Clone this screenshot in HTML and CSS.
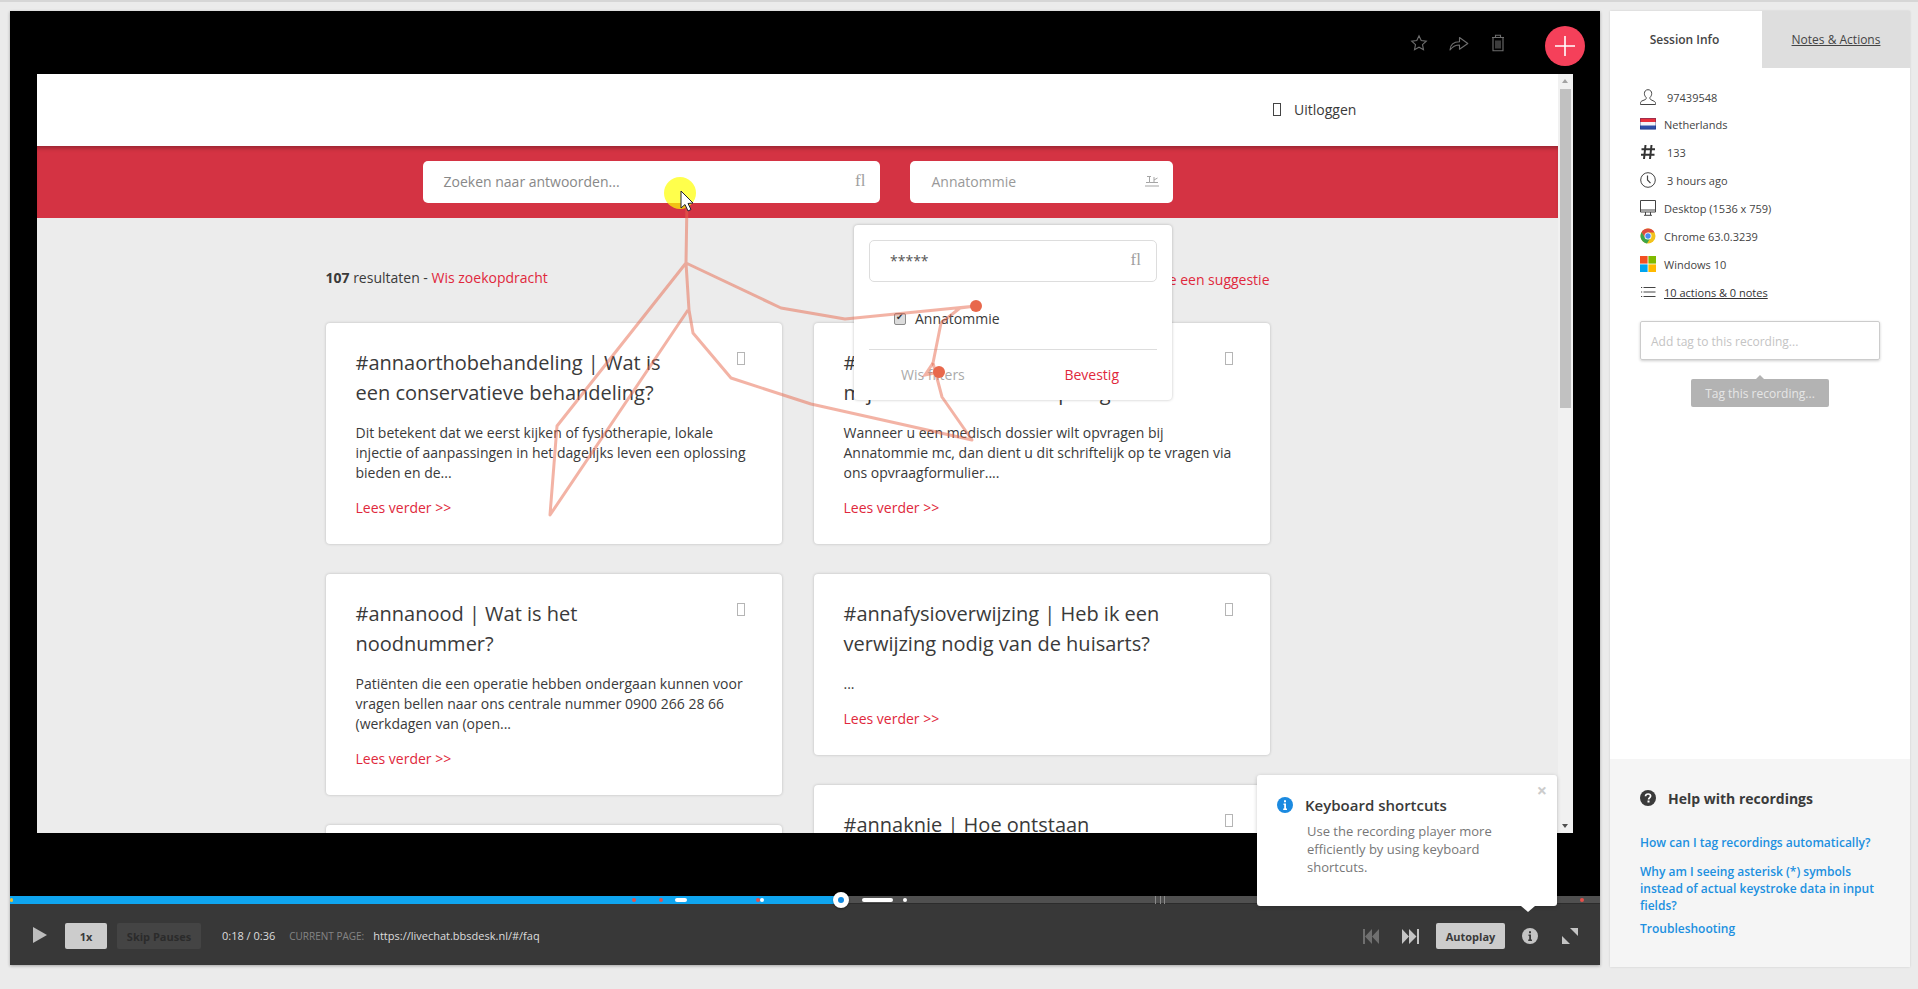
FILE: index.html
```html
<!DOCTYPE html>
<html lang="en">
<head>
  <meta charset="UTF-8">
  <title>Recording player</title>
  <link rel="stylesheet" href="styles.css">
</head>
<body>
  <div class="page">
    <div class="player">
      <div class="stage">
        <div class="stage-tools">
          <svg class="tool" width="18" height="18" viewBox="0 0 18 18"><path d="M9 1.800l2.200 4.700 5.100.6-3.800 3.500 1 5.100L9 13.200l-4.500 2.500 1-5.100-3.800-3.500 5.100-.6z" fill="none" stroke="#6e6e6e" stroke-width="1.100"/></svg>
          <svg class="tool" width="20" height="18" viewBox="0 0 20 18"><path d="M1 16c.3-5.400 3.600-8.300 9.500-8.300V3.500L18.800 9.500l-8.300 5.700v-4.200C6.500 11 3.500 12.500 1 16z" fill="none" stroke="#6e6e6e" stroke-width="1.100" stroke-linejoin="round"/></svg>
          <svg class="tool" width="14" height="18" viewBox="0 0 14 18"><path d="M1 3.500h12M4.500 3.500V1.200h5v2.300M2 3.500v13.300h10V3.500M5 6.500v8M7 6.500v8M9 6.500v8" fill="none" stroke="#6e6e6e" stroke-width="1.100"/></svg>
          <button class="add-btn" type="button" aria-label="Add"><svg width="20" height="20" viewBox="0 0 20 20"><path d="M10 0v20M0 10h20" stroke="#fff" stroke-width="1.600"/></svg></button>
        </div>

        <div class="viewer">
          <div class="site">
            <div class="site-header">
              <span class="tofu tofu-nav"></span>
              <span class="logout">Uitloggen</span>
            </div>
            <div class="site-search">
              <div class="field field-main"><span>Zoeken naar antwoorden...</span><span class="field-icon">fl</span></div>
              <div class="field field-filter"><span>Annatommie</span>
                <svg class="filter-icon" width="14" height="11" viewBox="0 0 14 11"><path d="M0 10h14M2 .5h4M4.500 .5v6H1M4.500 6.500h8.500M9 1v5.500M9 4l3.500-2" fill="none" stroke="#a5a5a5" stroke-width="1"/></svg>
              </div>
            </div>
            <div class="site-body">
              <div class="results-line">
                <div><b>107</b> resultaten - <a class="red" href="#">Wis zoekopdracht</a></div>
                <a class="red suggest" href="#">Doe een suggestie</a>
              </div>
              <div class="columns">
                <div class="col">
                  <div class="card">
                    <div class="card-head"><h3>#annaorthobehandeling | Wat is<br>een conservatieve behandeling?</h3><span class="tofu"></span></div>
                    <p>Dit betekent dat we eerst kijken of fysiotherapie, lokale injectie of aanpassingen in het dagelijks leven een oplossing bieden en de...</p>
                    <a class="red more" href="#">Lees verder &gt;&gt;</a>
                  </div>
                  <div class="card">
                    <div class="card-head"><h3>#annanood | Wat is het<br>noodnummer?</h3><span class="tofu"></span></div>
                    <p>Patiënten die een operatie hebben ondergaan kunnen voor vragen bellen naar ons centrale nummer 0900 266 28 66 (werkdagen van (open...</p>
                    <a class="red more" href="#">Lees verder &gt;&gt;</a>
                  </div>
                  <div class="card card-empty"></div>
                </div>
                <div class="col">
                  <div class="card">
                    <div class="card-head"><h3>#annadossier | Hoe kan ik<br>mijn medisch dossier opvragen?</h3><span class="tofu"></span></div>
                    <p>Wanneer u een medisch dossier wilt opvragen bij Annatommie mc, dan dient u dit schriftelijk op te vragen via ons opvraagformulier....</p>
                    <a class="red more" href="#">Lees verder &gt;&gt;</a>
                  </div>
                  <div class="card">
                    <div class="card-head"><h3>#annafysioverwijzing | Heb ik een<br>verwijzing nodig van de huisarts?</h3><span class="tofu"></span></div>
                    <p>...</p>
                    <a class="red more" href="#">Lees verder &gt;&gt;</a>
                  </div>
                  <div class="card">
                    <div class="card-head"><h3>#annaknie | Hoe ontstaan</h3><span class="tofu"></span></div>
                  </div>
                </div>
              </div>
            </div>
          </div>

          <div class="scrollbar">
            <span class="arrow-up"></span>
            <span class="thumb"></span>
            <span class="arrow-down"></span>
          </div>

          <div class="dropdown">
            <div class="dropdown-search"><span>*****</span><span class="field-icon">fl</span></div>
            <label class="dropdown-option"><input type="checkbox" checked> Annatommie</label>
            <div class="dropdown-foot">
              <span class="muted">Wis filters</span>
              <span class="red">Bevestig</span>
            </div>
          </div>

          <svg class="trail" viewBox="37 74 1536 759" width="1536" height="759">
            <circle cx="680" cy="193" r="16" fill="#ffff00" fill-opacity=".7"/>
            <polyline points="687,200 686,263 689,310 693,333 731,378 811,404 972,440 942,397 933,363 941,323 960,308 976,306 845,319 781,308 686,263 557,426 550,515 688,310" fill="none" stroke="#e8684c" stroke-opacity=".5" stroke-width="3" stroke-linejoin="round"/>
            <polyline points="933,363 925,375 939,372" fill="none" stroke="#e8684c" stroke-opacity=".5" stroke-width="3"/>
            <circle cx="976" cy="306" r="6" fill="#e8684c"/>
            <circle cx="939" cy="372" r="6" fill="#e8684c"/>
            <path d="M681 191v17l4-3.500 3 6.500 3-1.500-3-6 5-.5z" fill="#fff" stroke="#223" stroke-width="1"/>
          </svg>
        </div>
      </div>

      <div class="progress">
        <span class="progress-fill"></span>
        <span class="mark mark-yellow" style="left:0px"></span>
        <span class="mark mark-red" style="left:622px"></span>
        <span class="mark mark-red" style="left:649px"></span>
        <span class="mark mark-white" style="left:665px;width:12px"></span>
        <span class="mark mark-red" style="left:746px"></span>
        <span class="mark mark-white" style="left:750px"></span>
        <span class="mark mark-white" style="left:852px;width:31px"></span>
        <span class="mark mark-white" style="left:893px"></span>
        <span class="tick" style="left:1145px"></span>
        <span class="tick" style="left:1150px"></span>
        <span class="tick" style="left:1154px"></span>
        <span class="mark mark-red" style="left:1570px"></span>
        <span class="knob"></span>
      </div>

      <div class="controls">
        <svg class="play" width="14" height="16" viewBox="0 0 14 16"><path d="M0 0l14 8-14 8z" fill="#bdbdbd"/></svg>
        <button class="ctl-btn speed" type="button">1x</button>
        <button class="ctl-btn skip" type="button">Skip Pauses</button>
        <span class="time">0:18 / 0:36</span>
        <span class="page-label">CURRENT PAGE:</span>
        <span class="page-url">https://livechat.bbsdesk.nl/#/faq</span>
        <div class="controls-right">
          <svg width="16" height="15" viewBox="0 0 16 15"><path d="M0 0h2v15H0zM9 0v15L2 7.500zM16 0v15L9 7.500z" fill="#6f6f6f"/></svg>
          <svg width="17" height="15" viewBox="0 0 17 15"><path d="M0 0v15l7-7.500zM7 0v15l7.500-7.500zM15 0h2v15h-2z" fill="#c4c4c4"/></svg>
          <button class="ctl-btn autoplay" type="button">Autoplay</button>
          <svg width="16" height="16" viewBox="0 0 16 16"><circle cx="8" cy="8" r="8" fill="#c4c4c4"/><path d="M7 3.200h2v2H7zM6.500 6.500H9v5h1V13H6.200v-1.500h1v-3.500h-.7z" fill="#383838"/></svg>
          <svg class="fullscreen" width="16" height="16" viewBox="0 0 16 16"><path d="M8 0h8v8zM0 8l8 8H0z" fill="#c4c4c4"/></svg>
        </div>
      </div>

      <div class="shortcut-tip">
        <button class="tip-close" type="button" aria-label="Close">×</button>
        <div class="tip-title">
          <svg width="16" height="16" viewBox="0 0 16 16"><circle cx="8" cy="8" r="8" fill="#1b8ae0"/><path d="M7 3.200h2v2H7zM6.500 6.500H9v5h1V13H6.200v-1.500h1v-3.500h-.7z" fill="#fff"/></svg>
          <span>Keyboard shortcuts</span>
        </div>
        <p>Use the recording player more efficiently by using keyboard shortcuts.</p>
      </div>
    </div>

    <aside class="side">
      <div class="tabs">
        <div class="tab active">Session Info</div>
        <div class="tab">Notes &amp; Actions</div>
      </div>
      <div class="side-main">
        <ul class="info">
          <li class="wide">
            <svg width="16" height="16" viewBox="0 0 16 16"><path d="M8 .7c-2.300 0-3.600 1.700-3.600 3.900 0 1.600.8 3 1.700 3.800.3.900 0 1.700-.6 2.100L1.800 12c-1.100.6-1.300 1.400-1.300 2.500v1h15v-1c0-1-.3-1.700-1.300-2.200l-3.500-1.700c-.7-.5-1-1.300-.7-2.200.9-.8 1.700-2.200 1.700-3.800C11.700 2.400 10.300.7 8 .7z" fill="none" stroke="#444" stroke-width="1"/></svg>
            <span>97439548</span>
          </li>
          <li>
            <svg width="16" height="16" viewBox="0 0 16 16"><rect y="2" width="16" height="4" fill="#e8303c"/><rect y="6" width="16" height="3.500" fill="#f4f4f8"/><rect y="9.500" width="16" height="4" fill="#2f4fa8"/><path d="M.5 2.500h15v10.500H.5z" fill="none" stroke="#1b2a6b" stroke-opacity=".35"/></svg>
            <span>Netherlands</span>
          </li>
          <li class="wide">
            <svg width="16" height="16" viewBox="0 0 16 16"><path d="M5.500 1L4 15M11.500 1L10 15M1.500 5.300h13.500M1 10.700h13.500" stroke="#333" stroke-width="2"/></svg>
            <span>133</span>
          </li>
          <li class="wide">
            <svg width="16" height="16" viewBox="0 0 16 16"><circle cx="8" cy="8" r="7.300" fill="none" stroke="#444" stroke-width="1"/><path d="M7.500 3.500V8l3 3.200" fill="none" stroke="#444" stroke-width="1.200"/></svg>
            <span>3 hours ago</span>
          </li>
          <li>
            <svg width="16" height="16" viewBox="0 0 16 16"><path d="M.5 .5h15v11.500H.5zM.5 10h15M5.500 12v3M10.500 12v3M4 15.300h8" fill="none" stroke="#444" stroke-width="1"/></svg>
            <span>Desktop (1536 x 759)</span>
          </li>
          <li>
            <svg width="16" height="16" viewBox="0 0 16 16"><circle cx="8" cy="8" r="7.500" fill="#f2c31d"/><path d="M8 .5A7.500 7.500 0 0 0 1.500 4.250L4.500 9.500 8 4.500h6.500A7.500 7.500 0 0 0 8 .5z" fill="#dd4b3e"/><path d="M1.500 4.250A7.500 7.500 0 0 0 7 15.430L10 10.500H5.500z" fill="#3ba54a"/><circle cx="8" cy="8" r="3.500" fill="#fff"/><circle cx="8" cy="8" r="2.700" fill="#4a8af0"/></svg>
            <span>Chrome 63.0.3239</span>
          </li>
          <li>
            <svg width="16" height="16" viewBox="0 0 16 16"><rect width="7.600" height="7.600" fill="#f25022"/><rect x="8.400" width="7.600" height="7.600" fill="#7fba00"/><rect y="8.400" width="7.600" height="7.600" fill="#00a4ef"/><rect x="8.400" y="8.400" width="7.600" height="7.600" fill="#ffb900"/></svg>
            <span>Windows 10</span>
          </li>
          <li>
            <svg width="16" height="16" viewBox="0 0 16 16"><path d="M3.500 3.500H15.500M3.500 8H15.500M3.500 12.500H15.500M1 3.500h1.200M1 8h1.200M1 12.500h1.200" stroke="#444" stroke-width="1"/></svg>
            <a class="actions-link" href="#">10 actions &amp; 0 notes</a>
          </li>
        </ul>
        <div class="tag-input">Add tag to this recording...</div>
        <div class="tag-tip">Tag this recording...</div>
      </div>
      <div class="help">
        <div class="help-title">
          <svg width="16" height="16" viewBox="0 0 16 16"><circle cx="8" cy="8" r="8" fill="#3a3a3a"/><path d="M5.500 6.200C5.600 4.700 6.700 4 8.100 4c1.500 0 2.500.9 2.500 2.100 0 1.800-2 1.700-2 3.300" fill="none" stroke="#fff" stroke-width="1.700"/><rect x="7.500" y="10.500" width="2" height="2" fill="#fff"/></svg>
          <span>Help with recordings</span>
        </div>
        <a class="help-link" href="#">How can I tag recordings automatically?</a>
        <a class="help-link help-link-gap" href="#">Why am I seeing asterisk (*) symbols instead of actual keystroke data in input fields?</a>
        <a class="help-link" href="#">Troubleshooting</a>
      </div>
    </aside>
  </div>
</body>
</html>
```

FILE: styles.css
```css
* {
  box-sizing: border-box;
}
html, body {
  height: 100%;
}
body {
  margin: 0;
  background-color: #ebebeb;
  border-top: 2px solid #d6d6d6;
  font-family: "Open Sans", sans-serif;
  color: #333;
  overflow: hidden;
}
a {
  text-decoration: none;
}
button {
  font-family: inherit;
  border: none;
  cursor: pointer;
}
.red {
  color: #e0283c;
}
.muted {
  color: #aaa;
}
.page {
  display: flex;
  align-items: flex-start;
  gap: 10px;
  padding: 9px 8px 0 10px;
}

/* player */
.player {
  position: relative;
  width: 1590px;
  height: 954px;
  display: flex;
  flex-direction: column;
  box-shadow: 0 1px 3px rgba(0,0,0,0.3);
}
.stage {
  flex: 1;
  background-color: #000;
  display: flex;
  flex-direction: column;
}
.stage-tools {
  height: 63px;
  display: flex;
  align-items: flex-start;
  justify-content: flex-end;
  padding-right: 15px;
}
.tool {
  margin-top: 23px;
  margin-right: 21px;
}
.tool:nth-child(2) {
  margin-right: 22px;
}
.tool:nth-child(3) {
  margin-right: 40px;
}
.add-btn {
  width: 40px;
  height: 40px;
  margin-top: 15px;
  border-radius: 50%;
  background-color: #f5405a;
  display: flex;
  align-items: center;
  justify-content: center;
  padding: 0;
}

/* recorded page */
.viewer {
  position: relative;
  width: 1536px;
  height: 759px;
  margin-left: 27px;
  display: flex;
  overflow: hidden;
  background-color: #ececec;
}
.site {
  flex: 1;
  min-width: 0;
}
.site-header {
  height: 72px;
  background-color: #fff;
  display: flex;
  align-items: center;
  padding: 0 0 2px 1236px;
  font-size: 14px;
  gap: 13px;
}
.logout {
  color: #3a3a3a;
}
.tofu {
  flex: none;
  width: 8px;
  height: 13px;
  border: 1px solid #b5b5b5;
  margin: 4px 7px 0 0;
}
.tofu-nav {
  border-color: #444;
  margin: 0;
}
.site-search {
  height: 72px;
  background-color: #d43343;
  box-shadow: inset 0 4px 4px -2px rgba(0,0,0,0.3);
  display: flex;
  justify-content: center;
  padding-top: 15px;
  gap: 30px;
}
.field {
  height: 42px;
  background-color: #fff;
  border-radius: 5px;
  display: flex;
  align-items: center;
  justify-content: space-between;
  padding-bottom: 2px;
  font-size: 14px;
}
.field-main {
  width: 457px;
  padding-left: 21px;
  padding-right: 14px;
  color: #888;
}
.field-filter {
  width: 263px;
  padding-left: 22px;
  padding-right: 14px;
  color: #999;
}
.field-icon {
  font-family: "Liberation Serif", serif;
  font-size: 17px;
  color: #a0a0a0;
}
.site-body {
  width: 944px;
  margin: 0 auto;
}
.results-line {
  height: 105px;
  display: flex;
  justify-content: space-between;
  padding-top: 50px;
  font-size: 14px;
  color: #3a3a3a;
}
.suggest {
  padding-top: 2px;
}
.columns {
  display: flex;
  gap: 32px;
}
.col {
  width: 456px;
}
.card {
  background-color: #fff;
  border-radius: 4px;
  box-shadow: 0 0 3px rgba(0,0,0,0.22);
  padding: 25px 30px 26px;
  margin-bottom: 30px;
}
.card-empty {
  height: 60px;
}
.card-head {
  display: flex;
  justify-content: space-between;
  align-items: flex-start;
}
.card h3 {
  margin: 0;
  font-size: 20px;
  line-height: 30px;
  font-weight: 400;
  color: #3a3a3a;
  white-space: nowrap;
}
.card p {
  margin: 15px 0 15px;
  font-size: 14px;
  line-height: 20px;
  color: #3a3a3a;
}
.more {
  display: block;
  font-size: 14px;
  line-height: 20px;
}
.scrollbar {
  width: 15px;
  background-color: #f1f1f1;
  display: flex;
  flex-direction: column;
  align-items: center;
  position: relative;
}
.thumb {
  width: 11px;
  height: 319px;
  margin-top: 15px;
  background-color: #c1c1c1;
}
.arrow-up, .arrow-down {
  position: absolute;
  left: 4px;
  width: 0;
  height: 0;
  border-left: 3.500px solid transparent;
  border-right: 3.500px solid transparent;
}
.arrow-up {
  top: 5px;
  border-bottom: 4px solid #a3a3a3;
}
.arrow-down {
  bottom: 5px;
  border-top: 4px solid #505050;
}

/* filter menu over the page */
.dropdown {
  position: absolute;
  left: 817px;
  top: 151px;
  width: 318px;
  height: 175px;
  padding: 15px;
  background-color: #fff;
  border-radius: 4px;
  box-shadow: 0 0 3px rgba(0,0,0,0.25);
  font-size: 14px;
}
.dropdown-search {
  height: 42px;
  border: 1px solid #ddd;
  border-radius: 5px;
  display: flex;
  align-items: center;
  justify-content: space-between;
  padding: 0 15px 2px 20px;
  color: #555;
}
.dropdown-option {
  display: flex;
  align-items: center;
  height: 27px;
  margin: 23px 0 0 25px;
  gap: 9px;
  color: #3a3a3a;
}
.dropdown-option input {
  appearance: none;
  position: relative;
  width: 12px;
  height: 12px;
  margin: 0;
  border: 1px solid #8a8a8a;
  border-radius: 2px;
  background-color: #dcdcdc;
}
.dropdown-option input::after {
  content: "✔";
  position: absolute;
  left: 1px;
  top: -2px;
  font-family: "DejaVu Sans", sans-serif;
  font-size: 9px;
  color: #333;
}
.dropdown-foot {
  display: flex;
  justify-content: space-between;
  border-top: 1px solid #ddd;
  margin-top: 17px;
  padding: 15px 38px 0 32px;
}
.trail {
  position: absolute;
  left: 0;
  top: 0;
  pointer-events: none;
}

/* timeline */
.progress {
  position: relative;
  height: 8px;
  background-color: #505050;
  border-bottom: 1px solid #2c2c2c;
}
.progress-fill {
  position: absolute;
  left: 0;
  top: 0;
  height: 8px;
  width: 831px;
  background-color: #0fa5ef;
}
.mark {
  position: absolute;
  top: 2px;
  height: 4px;
  width: 4px;
  border-radius: 2px;
}
.mark-red {
  background-color: #e8504a;
}
.mark-white {
  background-color: #fff;
}
.mark-yellow {
  background-color: #f0c030;
  width: 3px;
}
.tick {
  position: absolute;
  top: 0;
  width: 1px;
  height: 8px;
  background-color: #8a8a8a;
}
.knob {
  position: absolute;
  left: 823px;
  top: -4px;
  width: 16px;
  height: 16px;
  border-radius: 50%;
  background-color: #fff;
  border: 5px solid #fff;
  box-shadow: 0 1px 2px rgba(0,0,0,0.4);
}
.knob::after {
  content: "";
  display: block;
  width: 6px;
  height: 6px;
  border-radius: 50%;
  background-color: #1088e0;
}

/* control bar */
.controls {
  height: 61px;
  flex: none;
  background-color: #383838;
  display: flex;
  align-items: flex-start;
  padding: 19px 22px 0 23px;
  color: #ddd;
  font-size: 11px;
}
.play {
  margin: 4px 18px 0 0;
}
.ctl-btn {
  height: 26px;
  border-radius: 2px;
  font-size: 11px;
  font-weight: 700;
  padding: 0;
}
.speed {
  width: 42px;
  background-color: #ccc;
  color: #3a3a3a;
  margin-right: 10px;
}
.skip {
  width: 84px;
  background-color: #444;
  color: #2b2b2b;
  margin-right: 21px;
}
.time {
  margin-right: 14px;
  line-height: 26px;
}
.page-label {
  font-size: 10px;
  color: #858585;
  margin-right: 9px;
  line-height: 26px;
}
.page-url {
  line-height: 26px;
}
.controls-right {
  margin-left: auto;
  display: flex;
  align-items: center;
  height: 26px;
  gap: 23px;
}
.autoplay {
  width: 69px;
  background-color: #ccc;
  color: #3a3a3a;
  margin: 0 -6px 0 -6px;
}
.fullscreen {
  margin-left: 1px;
}

/* tooltip over the bar */
.shortcut-tip {
  position: absolute;
  right: 43px;
  bottom: 59px;
  width: 300px;
  height: 131px;
  background-color: #fff;
  border-radius: 3px;
  box-shadow: 0 1px 4px rgba(0,0,0,0.2);
  padding: 19px 20px 0;
}
.shortcut-tip::after {
  content: "";
  position: absolute;
  left: 264px;
  top: 131px;
  border-left: 7px solid transparent;
  border-right: 7px solid transparent;
  border-top: 6px solid #fff;
}
.tip-close {
  position: absolute;
  right: 9px;
  top: 5px;
  width: 12px;
  height: 20px;
  padding: 0;
  background: none;
  font-size: 18px;
  font-weight: 700;
  line-height: 20px;
  color: #ccc;
}
.tip-title {
  display: flex;
  align-items: center;
  gap: 12px;
  height: 22px;
  font-size: 15px;
  font-weight: 600;
  color: #3a3a3a;
}
.shortcut-tip p {
  margin: 6px 25px 0 30px;
  font-size: 13px;
  line-height: 18px;
  color: #777;
}

/* side panel */
.side {
  width: 300px;
  height: 956px;
  background-color: #fff;
  box-shadow: 0 0 2px rgba(0,0,0,0.12);
  display: flex;
  flex-direction: column;
}
.tabs {
  display: flex;
  height: 57px;
  font-size: 12px;
}
.tab {
  flex: 1;
  display: flex;
  align-items: center;
  justify-content: center;
  background-color: #dedede;
  color: #444;
  text-decoration: underline;
}
.tab.active {
  flex: none;
  width: 152px;
  padding-right: 3px;
  background-color: #fff;
  font-weight: 600;
  text-decoration: none;
}
.side-main {
  flex: 1;
  padding: 14px 30px 0;
}
.info {
  list-style: none;
  margin: 0 0 15px;
  padding: 0;
}
.info li {
  height: 28px;
  display: flex;
  align-items: center;
  gap: 8px;
  font-size: 11px;
  color: #444;
}
.info li:first-child {
  padding-top: 2px;
}
.info li.wide {
  gap: 11px;
}
.info svg {
  flex: none;
}
.actions-link {
  color: #333;
  text-decoration: underline;
}
.tag-input {
  height: 39px;
  border: 1px solid #ccc;
  border-radius: 2px;
  box-shadow: 0 1px 3px rgba(0,0,0,0.2);
  padding: 2px 10px 0;
  display: flex;
  align-items: center;
  font-size: 12px;
  color: #c4c4c4;
}
.tag-tip {
  position: relative;
  width: 138px;
  height: 28px;
  margin: 19px auto 0;
  background-color: #b3b3b3;
  border-radius: 2px;
  font-size: 12px;
  line-height: 30px;
  text-align: center;
  color: #e6e6e6;
}
.tag-tip::before {
  content: "";
  position: absolute;
  left: 65px;
  top: -4px;
  border-left: 4px solid transparent;
  border-right: 4px solid transparent;
  border-bottom: 4px solid #b3b3b3;
}
.help {
  height: 208px;
  background-color: #f5f5f5;
  padding: 29px 30px 0;
}
.help-title {
  display: flex;
  align-items: center;
  gap: 12px;
  height: 20px;
  font-size: 14px;
  font-weight: 700;
  color: #3a3a3a;
  margin-bottom: 26px;
}
.help-link {
  display: block;
  font-size: 12px;
  font-weight: 600;
  line-height: 17px;
  color: #2090e0;
  margin-bottom: 6px;
}
.help-link-gap {
  margin-top: 12px;
}
```
